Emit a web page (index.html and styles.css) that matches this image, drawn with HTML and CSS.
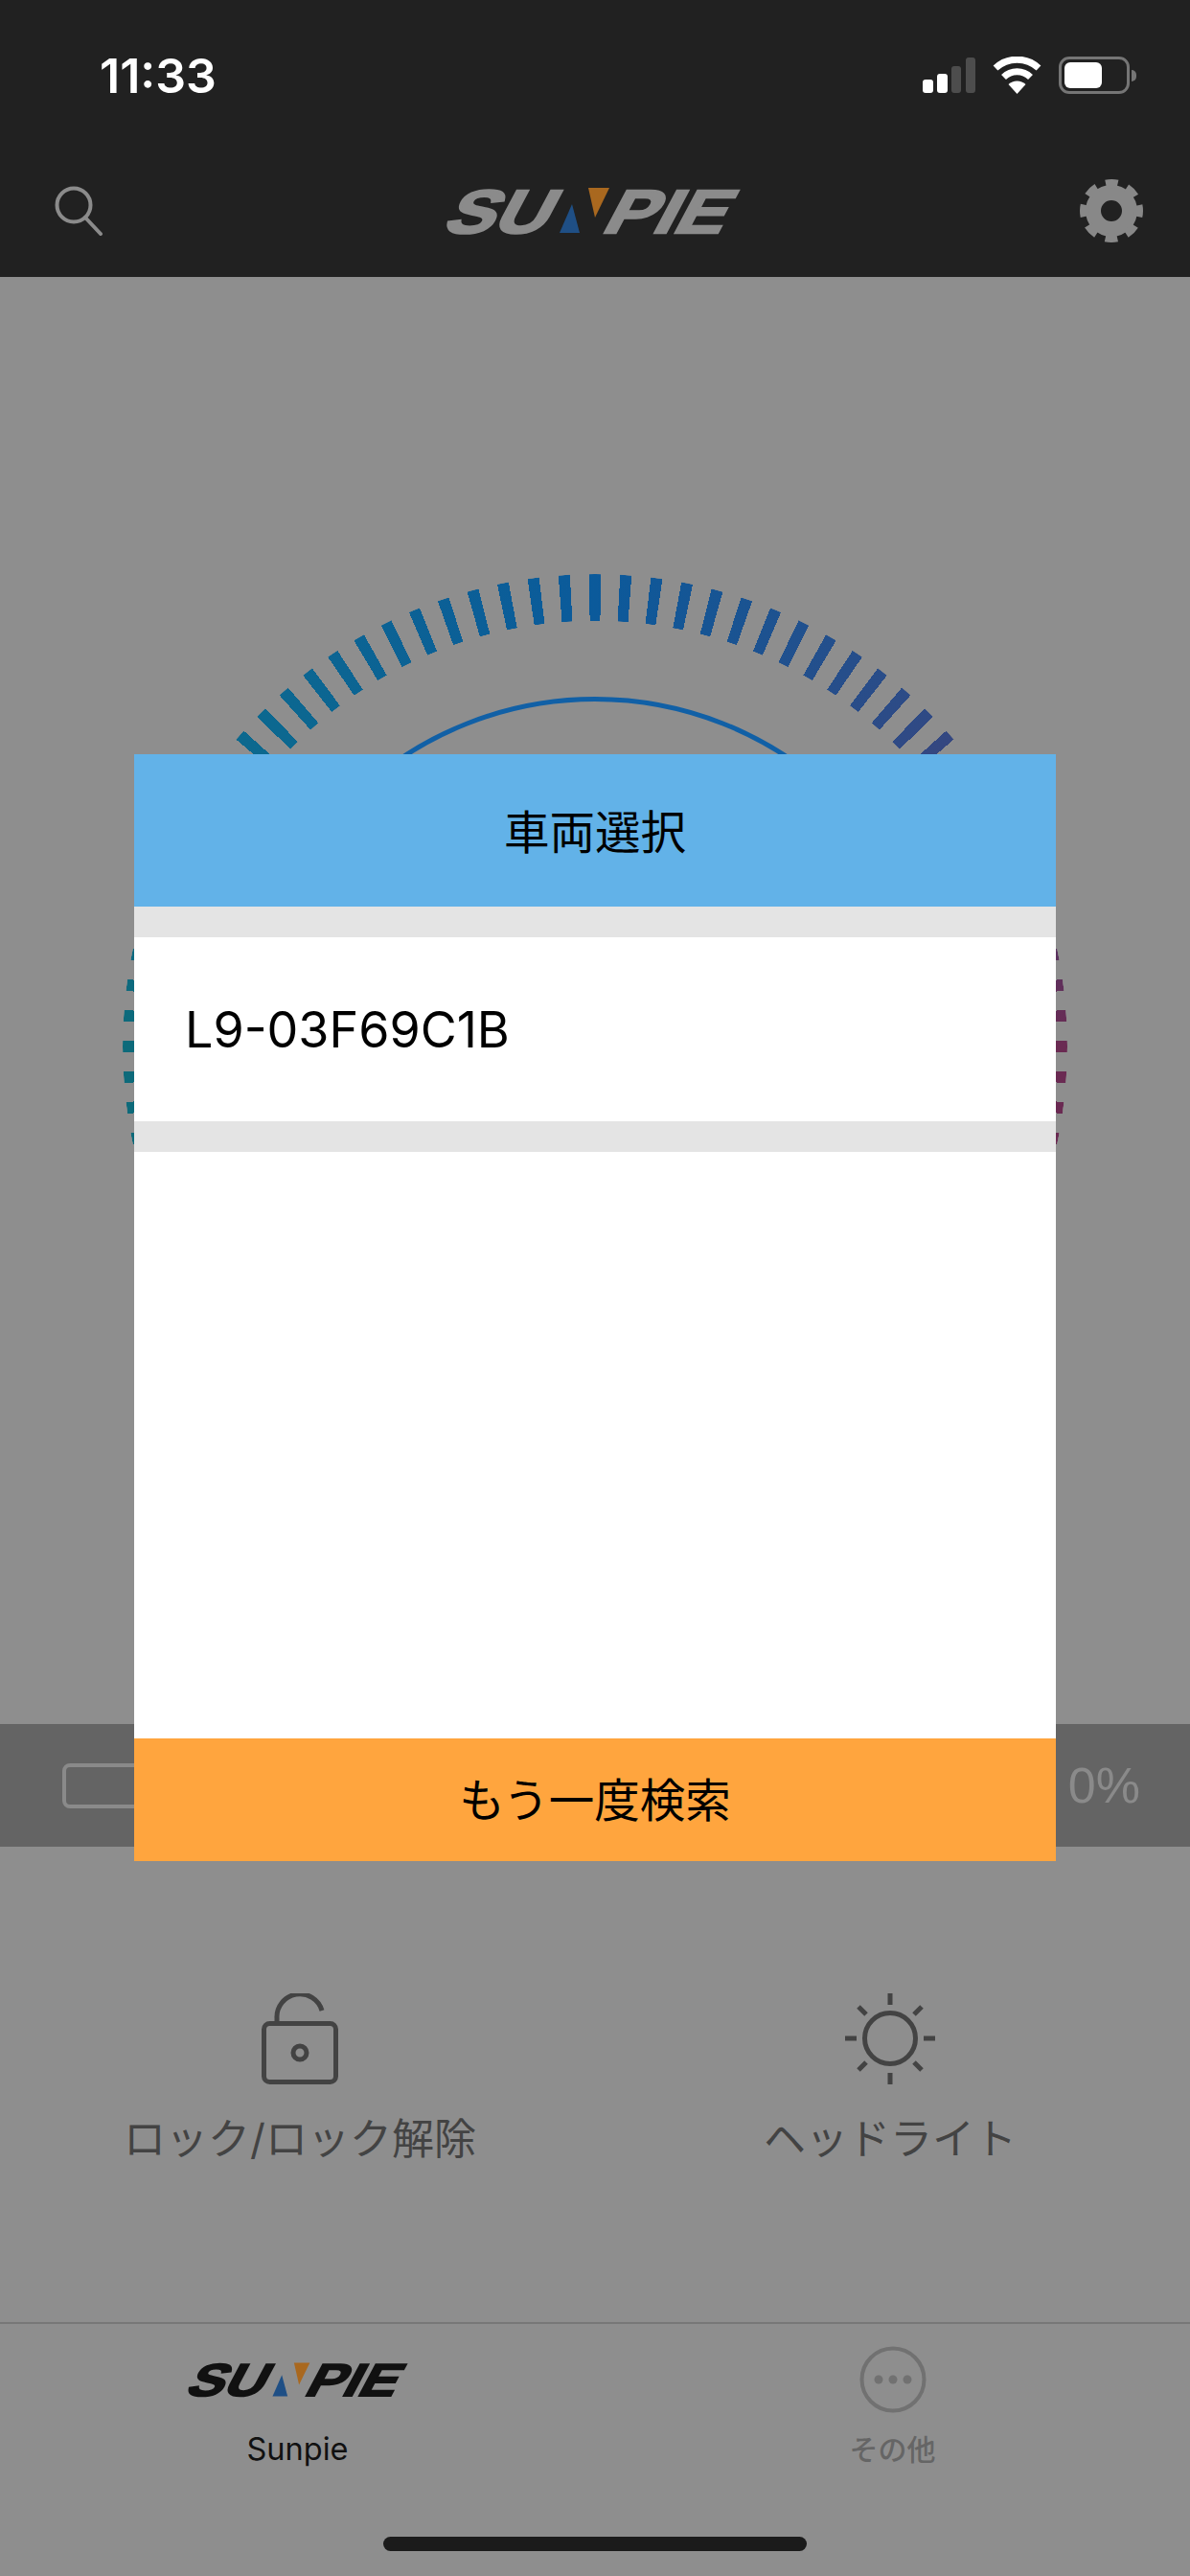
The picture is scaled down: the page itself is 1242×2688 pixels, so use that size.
FILE: index.html
```html
<!DOCTYPE html>
<html lang="ja">
<head>
    <meta charset="UTF-8">
    <meta name="viewport" content="width=device-width, initial-scale=1.0">
    <title>Sunpie</title>
    <link rel="stylesheet" href="styles.css">
</head>
<body>
    <div class="page">
        <header class="top">
            <div class="status">
                <span class="time">11:33</span>
                <div class="status-icons">
                    <svg class="signal" width="55" height="37" viewBox="0 0 55 37">
                        <rect class="on" x="0" y="23" width="11" height="14" rx="3"/>
                        <rect class="on" x="15" y="17" width="11" height="20" rx="3"/>
                        <rect class="off" x="30" y="9" width="10" height="28" rx="3"/>
                        <rect class="off" x="45" y="0" width="10" height="37" rx="3"/>
                    </svg>
                    <svg class="wifi" width="51" height="39" viewBox="0 0 51 39">
                        <path d="M3 12A33 33 0 0 1 48 12"/>
                        <path d="M11.5 21.5A20 20 0 0 1 39.5 21.5"/>
                        <path class="wedge" d="M25.5 39L16.5 29A13 13 0 0 1 34.5 29Z"/>
                    </svg>
                    <div class="battery">
                        <div class="battery-body"><div class="battery-fill"></div></div>
                        <div class="battery-nub"></div>
                    </div>
                </div>
            </div>
            <nav class="nav">
                <svg class="search-icon" width="55" height="52" viewBox="0 0 55 52">
                    <circle cx="20" cy="20" r="17.5"/>
                    <line x1="32" y1="33" x2="48" y2="50"/>
                </svg>
                <svg class="logo nav-logo" width="313" height="47" viewBox="0 0 313 47">
                    <g class="logo-word">
                        <text transform="translate(-3 46.5) skewX(-28)" textLength="108" lengthAdjust="spacingAndGlyphs">SU</text>
                        <text transform="translate(163 46.5) skewX(-28)" textLength="126" lengthAdjust="spacingAndGlyphs">PIE</text>
                    </g>
                    <polygon class="logo-blue" points="134,17 121,47 142,47"/>
                    <polygon class="logo-orange" points="151,0 173,0 158,31"/>
                </svg>
                <svg class="gear-icon" width="66" height="66" viewBox="0 0 66 66">
                    <circle class="gear-body" cx="33" cy="33" r="19"/>
                    <circle class="gear-teeth" cx="33" cy="33" r="28.5" stroke-dasharray="12.4 10" stroke-dashoffset="6.2"/>
                </svg>
            </nav>
        </header>

        <main class="main">
            <div class="gauge">
                <div class="gauge-ticks"></div>
                <div class="gauge-ring"></div>
            </div>

            <div class="level-bar">
                <div class="level-track"></div>
                <span class="level-value">0%</span>
            </div>

            <div class="actions">
                <div class="action">
                    <svg class="action-icon" width="80" height="95" viewBox="0 0 80 95">
                        <path d="M16 30V26A24 24 0 0 1 63 18"/>
                        <rect x="2.5" y="31.5" width="75" height="61" rx="6"/>
                        <circle cx="40" cy="62" r="7"/>
                    </svg>
                    <span class="action-label">ロック/ロック解除</span>
                </div>
                <div class="action">
                    <svg class="action-icon" width="94" height="95" viewBox="0 0 94 95">
                        <circle cx="47" cy="47" r="26.5"/>
                        <path d="M47 0V12M47 83V95M0 47H12M82 47H94M14 14L22 22M72 72L80 80M80 14L72 22M22 72L14 80"/>
                    </svg>
                    <span class="action-label">ヘッドライト</span>
                </div>
            </div>
        </main>

        <footer class="tabbar">
            <div class="tabs">
                <div class="tab tab-active">
                    <div class="tab-icon">
                        <svg class="logo" width="234" height="36" viewBox="0 0 313 47">
                            <g class="logo-word">
                                <text transform="translate(-3 46.5) skewX(-28)" textLength="108" lengthAdjust="spacingAndGlyphs">SU</text>
                                <text transform="translate(163 46.5) skewX(-28)" textLength="126" lengthAdjust="spacingAndGlyphs">PIE</text>
                            </g>
                            <polygon class="logo-blue" points="134,17 121,47 142,47"/>
                            <polygon class="logo-orange" points="151,0 173,0 158,31"/>
                        </svg>
                    </div>
                    <span class="tab-label">Sunpie</span>
                </div>
                <div class="tab">
                    <div class="tab-icon">
                        <svg class="more-icon" width="70" height="70" viewBox="0 0 70 70">
                            <circle class="more-ring" cx="35" cy="35" r="32.5"/>
                            <circle cx="20" cy="35" r="4.5"/>
                            <circle cx="35" cy="35" r="4.5"/>
                            <circle cx="50" cy="35" r="4.5"/>
                        </svg>
                    </div>
                    <span class="tab-label">その他</span>
                </div>
            </div>
            <div class="home-bar"></div>
        </footer>

        <section class="modal">
            <h2 class="modal-title">車両選択</h2>
            <div class="modal-list">
                <div class="modal-item">L9-03F69C1B</div>
            </div>
            <div class="modal-space"></div>
            <button class="modal-button" type="button">もう一度検索</button>
        </section>
    </div>
</body>
</html>
```

FILE: styles.css
```css
* {
    box-sizing: border-box;
}
body {
    margin: 0;
    font-family: "Inter", "Noto Sans CJK JP", sans-serif;
    background: #8e8e8e;
}
.page {
    position: relative;
    width: 1242px;
    height: 2688px;
    overflow: hidden;
    display: flex;
    flex-direction: column;
    background: #8e8e8e;
}

/* logo */
.logo {
    overflow: visible;
}
.logo-word {
    font-family: "Liberation Sans", sans-serif;
    font-weight: 700;
    font-size: 64px;
    fill: currentColor;
    stroke: currentColor;
    stroke-width: 2.4;
}
.logo-blue {
    fill: #1f4f85;
}
.logo-orange {
    fill: #a9681f;
}

/* top bar */
.top {
    height: 289px;
    background: #212121;
}
.status {
    height: 150px;
    display: flex;
    justify-content: space-between;
    padding: 55px 56px 0 104px;
}
.time {
    color: #fff;
    font-size: 50px;
    font-weight: 600;
    line-height: 48px;
}
.status-icons {
    display: flex;
    align-items: flex-start;
    padding-top: 4px;
}
.signal {
    margin: 1px 18px 0 0;
}
.signal .on {
    fill: #fff;
}
.signal .off {
    fill: #4d4d4d;
}
.wifi {
    margin-right: 18px;
}
.wifi path {
    fill: none;
    stroke: #fff;
    stroke-width: 7;
}
.wifi .wedge {
    fill: #fff;
    stroke: none;
}
.battery {
    display: flex;
    align-items: center;
}
.battery-body {
    width: 74px;
    height: 39px;
    border: 3px solid #757575;
    border-radius: 11px;
    padding: 3px;
}
.battery-fill {
    width: 39px;
    height: 100%;
    background: #fff;
    border-radius: 6px;
}
.battery-nub {
    width: 5px;
    height: 12px;
    margin-left: 2px;
    background: #757575;
    border-radius: 0 6px 6px 0;
}
.nav {
    height: 139px;
    display: flex;
    justify-content: space-between;
    align-items: center;
    padding: 0 49px 0 57px;
}
.search-icon {
    fill: none;
    stroke: #8b8b8b;
    stroke-width: 4;
    stroke-linecap: round;
}
.nav-logo {
    color: #8b8b8b;
}
.gear-icon {
    fill: none;
    stroke: #888;
}
.gear-body {
    stroke-width: 16;
}
.gear-teeth {
    stroke-width: 9;
}

/* gauge */
.main {
    flex: 1;
    display: flex;
    flex-direction: column;
    padding-top: 310px;
}
.gauge {
    position: relative;
    width: 986px;
    height: 986px;
    margin: 0 auto;
    flex-shrink: 0;
    display: flex;
    justify-content: center;
    align-items: center;
}
.gauge-ticks {
    position: absolute;
    inset: 0;
    border-radius: 50%;
    background: conic-gradient(#0b5a9b 0deg, #2f4a85 45deg, #6a2a52 90deg, #6a2a52 180deg, #0d6a7a 180deg, #0d6a7a 270deg, #0c6890 315deg, #0b5a9b 360deg);
    -webkit-mask-image: radial-gradient(closest-side, transparent 444px, #000 444.5px, #000 492.5px, transparent 493px), repeating-conic-gradient(from -0.7deg, #000 0 1.4deg, transparent 0 3.75deg);
    -webkit-mask-composite: source-in;
    mask-image: radial-gradient(closest-side, transparent 444px, #000 444.5px, #000 492.5px, transparent 493px), repeating-conic-gradient(from -0.7deg, #000 0 1.4deg, transparent 0 3.75deg);
    mask-composite: intersect;
}
.gauge-ring {
    width: 730px;
    height: 730px;
    border: 5px solid #1160a6;
    border-radius: 50%;
}

/* level bar */
.level-bar {
    height: 128px;
    margin-top: 214px;
    flex-shrink: 0;
    display: flex;
    justify-content: space-between;
    align-items: center;
    padding: 0 52px 0 65px;
    background: #646464;
}
.level-track {
    width: 300px;
    height: 47px;
    border: 4px solid #8a8a8a;
    border-radius: 8px;
}
.level-value {
    color: #8a8a8a;
    font-family: "Liberation Sans", sans-serif;
    font-size: 52px;
}

/* actions */
.actions {
    display: grid;
    grid-template-columns: 616px 616px;
    padding: 153px 5px 0;
}
.action {
    display: flex;
    flex-direction: column;
    align-items: center;
}
.action-icon {
    fill: none;
    stroke: #434343;
    stroke-width: 5;
}
.action-label {
    margin-top: 24px;
    color: #434343;
    font-size: 44px;
    line-height: 66px;
}

/* tabs */
.tabbar {
    height: 265px;
    flex-shrink: 0;
    border-top: 2px solid #777;
    padding-top: 23px;
}
.tabs {
    display: grid;
    grid-template-columns: 1fr 1fr;
}
.tab {
    display: flex;
    flex-direction: column;
    align-items: center;
    color: #656565;
}
.tab-active {
    color: #111;
}
.tab-icon {
    height: 70px;
    display: flex;
    align-items: center;
}
.tab-label {
    margin-top: 18px;
    font-size: 30px;
    font-weight: 500;
    line-height: 40px;
}
.tab-active .tab-label {
    font-size: 32.5px;
    font-weight: 400;
}
.more-icon {
    fill: #717171;
}
.more-ring {
    fill: none;
    stroke: #717171;
    stroke-width: 4;
}
.home-bar {
    width: 442px;
    height: 15px;
    margin: 71px auto 0;
    background: #1b1b1b;
    border-radius: 8px;
}

/* modal */
.modal {
    position: absolute;
    left: 140px;
    top: 787px;
    width: 962px;
    height: 1155px;
    display: flex;
    flex-direction: column;
    background: #fff;
    color: #000;
}
.modal-title {
    height: 159px;
    margin: 0;
    padding-bottom: 2px;
    display: flex;
    justify-content: center;
    align-items: center;
    background: #62b2e8;
    font-size: 47.5px;
    font-weight: 400;
}
.modal-list {
    padding: 32px 0;
    background: #e4e4e4;
}
.modal-item {
    height: 192px;
    display: flex;
    align-items: center;
    padding-left: 53px;
    background: #fff;
    font-size: 52px;
}
.modal-space {
    flex: 1;
}
.modal-button {
    height: 128px;
    border: none;
    padding: 0 0 5px;
    background: #ffa53e;
    color: #000;
    font-family: inherit;
    font-size: 47.5px;
}
```
